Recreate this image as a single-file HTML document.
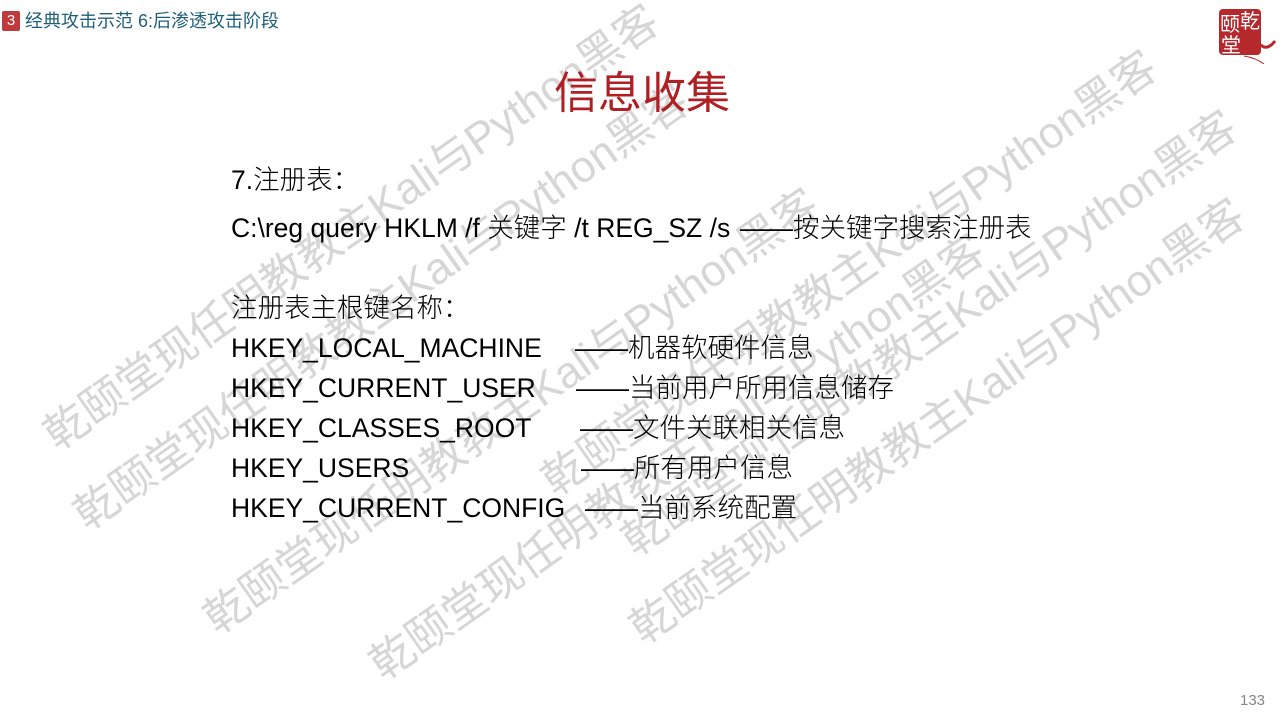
<!DOCTYPE html>
<html><head><meta charset="utf-8"><style>
body{margin:0;width:1280px;height:720px;background:#fff;position:relative;overflow:hidden;font-family:"Liberation Sans","Noto Sans CJK SC",sans-serif}
.wm{position:absolute;font-size:44px;line-height:44px;height:44px;white-space:nowrap;color:#d6d6d6;transform-origin:0 100%;transform:rotate(-35deg)}
.t{position:absolute;font-size:26.5px;color:#000;white-space:pre;line-height:30px}
.c{font-weight:300}
</style></head><body>
<div class="wm" style="left:62px;top:414px">乾颐堂现任明教教主Kali与Python黑客</div>
<div class="wm" style="left:92px;top:494px">乾颐堂现任明教教主Kali与Python黑客</div>
<div class="wm" style="left:222px;top:598px">乾颐堂现任明教教主Kali与Python黑客</div>
<div class="wm" style="left:388px;top:644px">乾颐堂现任明教教主Kali与Python黑客</div>
<div class="wm" style="left:648px;top:608px">乾颐堂现任明教教主Kali与Python黑客</div>
<div class="wm" style="left:560px;top:460px">乾颐堂现任明教教主Kali与Python黑客</div>
<div class="wm" style="left:640px;top:520px">乾颐堂现任明教教主Kali与Python黑客</div>

<div style="position:absolute;left:2px;top:11px;width:18px;height:20px;background:#c0393b;color:#fff;font-size:15px;text-align:center;line-height:20px;border-radius:2px">3</div>
<div style="position:absolute;left:25px;top:9px;font-size:18px;color:#1f5f7a;line-height:24px">经典攻击示范 6:后渗透攻击阶段</div>

<svg style="position:absolute;left:1216px;top:6px" width="62" height="58" viewBox="0 0 62 58">
<rect x="3" y="3" width="42" height="46" rx="4" fill="#b5282c"/>
<text x="4" y="25" font-size="20" fill="#fff" font-family="Noto Sans CJK SC">颐</text>
<text x="24" y="22" font-size="20" fill="#fff" font-family="Noto Sans CJK SC">乾</text>
<text x="5" y="46" font-size="20" fill="#fff" font-family="Noto Sans CJK SC">堂</text>
<path d="M30 42 q8 -8 16 -2 q6 4 13 -5" stroke="#b5282c" stroke-width="3" fill="none"/>
<path d="M28 50 q12 2 20 8" stroke="#b5282c" stroke-width="1" fill="none"/>
</svg>

<div style="position:absolute;left:554px;top:68px;font-size:44px;color:#b01f24;line-height:52px">信息收集</div>

<div class="t" style="left:231px;top:165px">7.<span class="c">注册表：</span></div>
<div class="t" style="left:231px;top:213px">C:\reg query HKLM /f <span class="c">关键字</span> /t REG_SZ /s</div>
<div class="t" style="left:740px;top:213px">——<span class="c">按关键字搜索注册表</span></div>
<div class="t c" style="left:231px;top:293px">注册表主根键名称：</div>
<div class="t" style="left:231px;top:333px">HKEY_LOCAL_MACHINE</div>
<div class="t" style="left:575px;top:333px">——<span class="c">机器软硬件信息</span></div>
<div class="t" style="left:231px;top:373px">HKEY_CURRENT_USER</div>
<div class="t" style="left:576px;top:373px">——<span class="c">当前用户所用信息储存</span></div>
<div class="t" style="left:231px;top:413px">HKEY_CLASSES_ROOT</div>
<div class="t" style="left:580px;top:413px">——<span class="c">文件关联相关信息</span></div>
<div class="t" style="left:231px;top:453px">HKEY_USERS</div>
<div class="t" style="left:581px;top:453px">——<span class="c">所有用户信息</span></div>
<div class="t" style="left:231px;top:493px">HKEY_CURRENT_CONFIG</div>
<div class="t" style="left:585px;top:493px">——<span class="c">当前系统配置</span></div>

<div style="position:absolute;left:1240px;top:692px;font-size:15px;color:#888">133</div>
</body></html>
